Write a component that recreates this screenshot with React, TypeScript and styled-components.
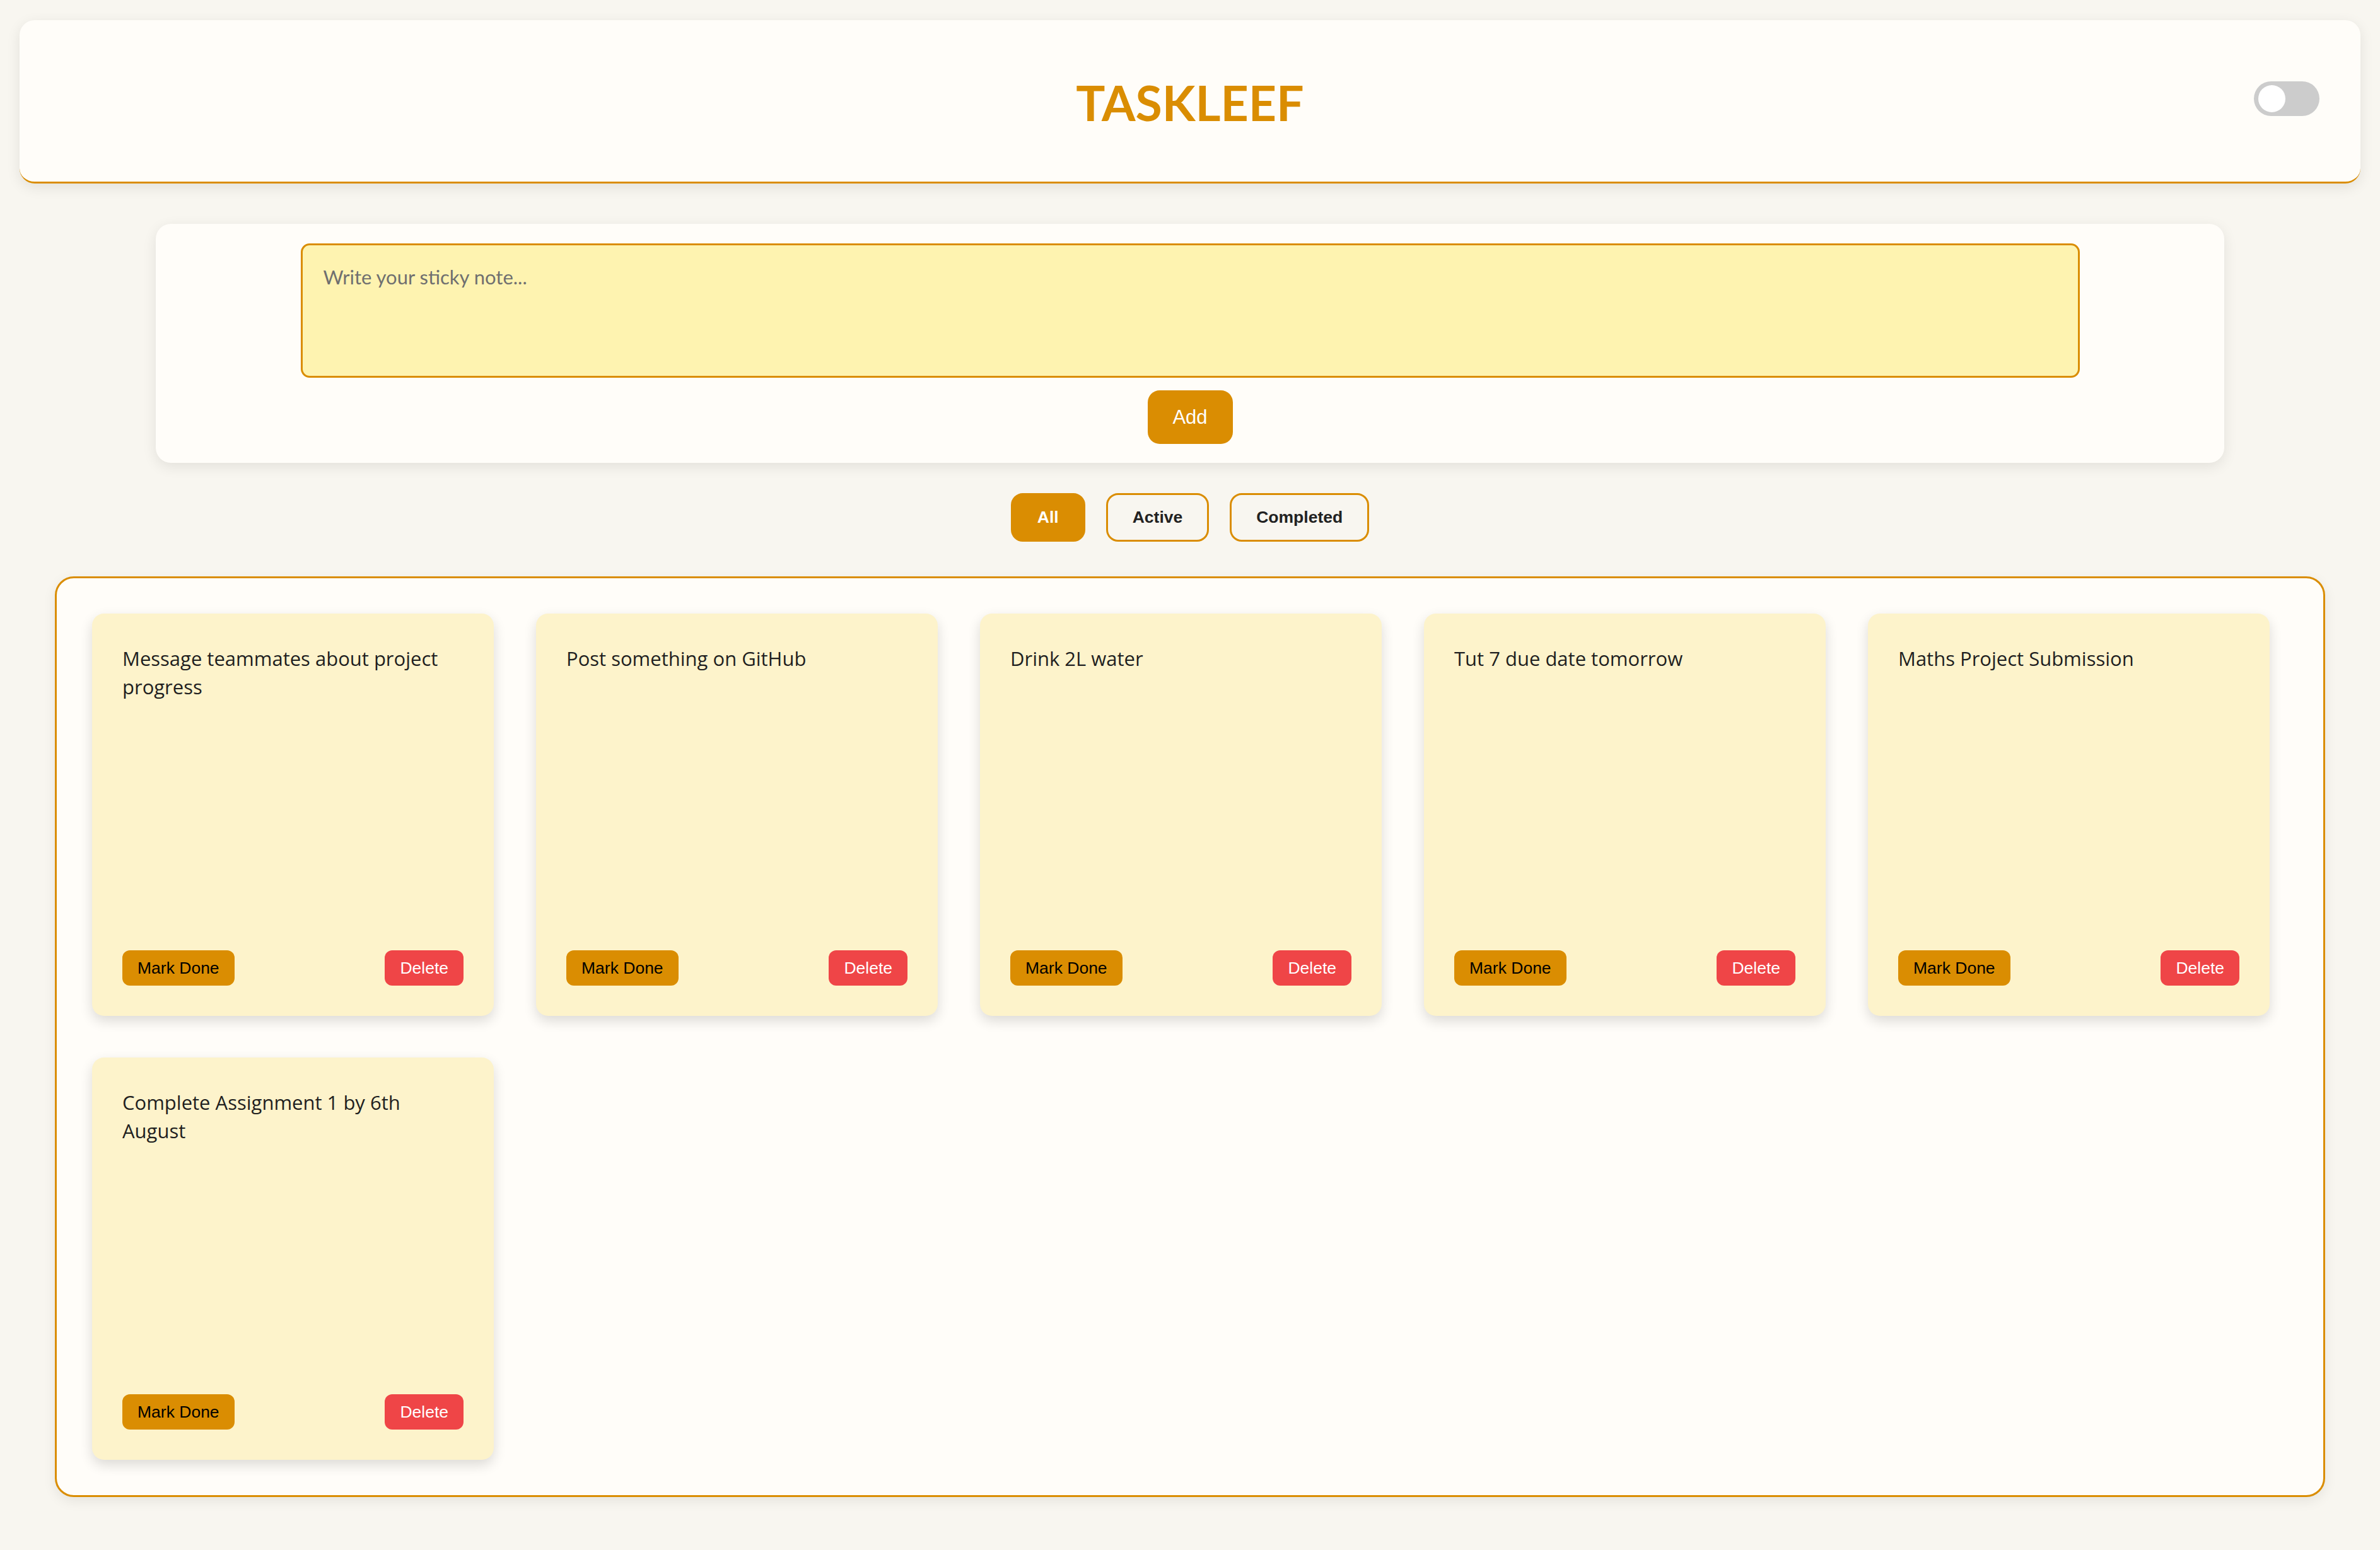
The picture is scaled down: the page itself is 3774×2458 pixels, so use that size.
import React, { useState } from "react";
import styled, { createGlobalStyle } from "styled-components";

const ORANGE = "#da8d02";
const RED = "#ef4547";

const GlobalStyle = createGlobalStyle`
  html, body {
    margin: 0;
    padding: 0;
    background: #f8f6f0;
  }
  body {
    font-family: Lato, "Open Sans", sans-serif;
  }
  * { box-sizing: border-box; }
`;

const Page = styled.div`
  padding: 32px 0 84px;
  display: flex;
  flex-direction: column;
  align-items: center;
`;

const Header = styled.header`
  align-self: stretch;
  margin: 0 31px;
  height: 259px;
  background: #fffdf9;
  border-bottom: 3px solid ${ORANGE};
  border-radius: 24px;
  box-shadow: 0 6px 22px rgba(0, 0, 0, 0.09);
  display: grid;
  grid-template-columns: 1fr auto 1fr;
  align-items: center;
  padding: 0 65px;
`;

const Title = styled.h1`
  grid-column: 2;
  margin: 0;
  font-family: Lato, sans-serif;
  font-weight: 700;
  font-size: 77px;
  color: ${ORANGE};
  line-height: 1;
  padding-top: 4px;
`;

const Toggle = styled.div`
  grid-column: 3;
  justify-self: end;
  margin-top: -8px;
  width: 104px;
  height: 55px;
  border-radius: 28px;
  background: #cccccc;
  display: flex;
  align-items: center;
  padding-left: 7px;
`;

const Knob = styled.span`
  width: 43px;
  height: 43px;
  border-radius: 50%;
  background: #ffffff;
`;

const InputCard = styled.section`
  margin-top: 64px;
  width: 3280px;
  background: #fffdf9;
  border-radius: 24px;
  box-shadow: 0 6px 22px rgba(0, 0, 0, 0.09);
  padding: 31px 0 30px;
  display: flex;
  flex-direction: column;
  align-items: center;
  gap: 20px;
`;

const NoteInput = styled.textarea`
  width: 2821px;
  height: 213px;
  resize: none;
  background: #fef3b0;
  border: 3px solid ${ORANGE};
  border-radius: 14px;
  padding: 29px 33px;
  font-family: Lato, sans-serif;
  font-size: 31px;
  line-height: 1.4;
  color: #222;
  outline: none;
  &::placeholder {
    color: #6f6f6f;
  }
`;

const AddButton = styled.button`
  width: 135px;
  height: 85px;
  border: none;
  border-radius: 19px;
  background: ${ORANGE};
  color: #ffffff;
  font-family: "Liberation Sans", Arial, sans-serif;
  font-size: 31px;
  cursor: pointer;
`;

const Filters = styled.nav`
  margin-top: 48px;
  display: flex;
  gap: 33px;
`;

const FilterButton = styled.button<{ $active?: boolean }>`
  height: 77px;
  padding: 0 39px;
  border-radius: 19px;
  border: 3px solid ${ORANGE};
  background: ${(p) => (p.$active ? ORANGE : "transparent")};
  color: ${(p) => (p.$active ? "#ffffff" : "#222222")};
  font-family: "Liberation Sans", Arial, sans-serif;
  font-weight: 700;
  font-size: 26.5px;
  cursor: pointer;
`;

const Board = styled.main`
  margin-top: 55px;
  align-self: stretch;
  margin-left: 87px;
  margin-right: 87px;
  border: 3px solid ${ORANGE};
  border-radius: 30px;
  background: #fffdf9;
  box-shadow: 0 6px 20px rgba(0, 0, 0, 0.08);
  padding: 56px;
  display: flex;
  flex-wrap: wrap;
  column-gap: 67px;
  row-gap: 66px;
`;

const Note = styled.article`
  width: 637px;
  height: 638px;
  background: #fdf3cb;
  border-radius: 19px;
  box-shadow: 0 8px 20px rgba(0, 0, 0, 0.14);
  padding: 48px;
  display: flex;
  flex-direction: column;
  justify-content: space-between;
`;

const NoteText = styled.p`
  margin: 0;
  padding-top: 1px;
  font-family: "Open Sans", sans-serif;
  font-weight: 500;
  font-size: 31px;
  line-height: 45px;
  color: #1f1f1f;
`;

const NoteActions = styled.div`
  display: flex;
  justify-content: space-between;
  align-items: center;
`;

const ActionButton = styled.button<{ $danger?: boolean }>`
  height: 56px;
  padding: 0 24px;
  border: none;
  border-radius: 12px;
  background: ${(p) => (p.$danger ? RED : ORANGE)};
  color: ${(p) => (p.$danger ? "#ffffff" : "#000000")};
  font-family: "Liberation Sans", Arial, sans-serif;
  font-size: 26.5px;
  cursor: pointer;
`;

const notes = [
  "Message teammates about project progress",
  "Post something on GitHub",
  "Drink 2L water",
  "Tut 7 due date tomorrow",
  "Maths Project Submission",
  "Complete Assignment 1 by 6th August",
];

export default function App() {
  const [filter, setFilter] = useState("All");
  return (
    <>
      <GlobalStyle />
      <Page>
        <Header>
          <Title>TASKLEEF</Title>
          <Toggle>
            <Knob />
          </Toggle>
        </Header>
        <InputCard>
          <NoteInput placeholder="Write your sticky note..." />
          <AddButton>Add</AddButton>
        </InputCard>
        <Filters>
          {["All", "Active", "Completed"].map((f) => (
            <FilterButton key={f} $active={filter === f} onClick={() => setFilter(f)}>
              {f}
            </FilterButton>
          ))}
        </Filters>
        <Board>
          {notes.map((n) => (
            <Note key={n}>
              <NoteText>{n}</NoteText>
              <NoteActions>
                <ActionButton>Mark Done</ActionButton>
                <ActionButton $danger>Delete</ActionButton>
              </NoteActions>
            </Note>
          ))}
        </Board>
      </Page>
    </>
  );
}
